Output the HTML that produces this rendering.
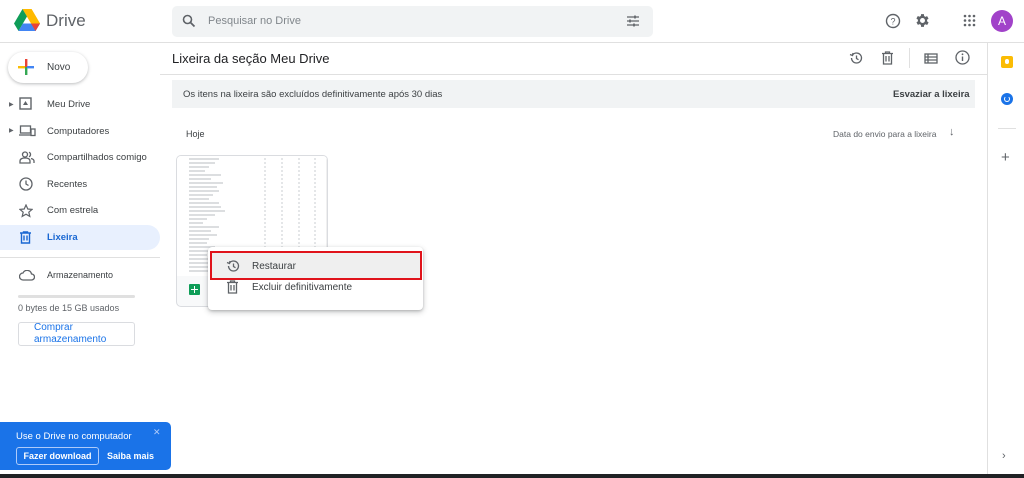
<!DOCTYPE html>
<html><head><meta charset="utf-8"><style>
*{box-sizing:border-box;margin:0;padding:0}
body{width:1024px;height:478px;overflow:hidden;background:#fff;font-family:"Liberation Sans",Arial,sans-serif;color:#3c4043;position:relative;font-size:9px}
.a{position:absolute}
.nav{position:absolute;left:47px;font-size:9.5px;color:#3c4043}
.ic{position:absolute;left:19px}
</style></head><body>
<!-- header -->
<svg class="a" style="left:14px;top:9px" width="26" height="22" viewBox="0 0 26 22"><path d="M8.5 0h9l8.5 14.5h-9z" fill="#ffba00"/><path d="M8.5 0L0 14.5l4.5 7.5L13 7.5z" fill="#0f9d58"/><path d="M4.5 22h17l4.5-7.5H9z" fill="#4285f4"/><path d="M17.5 0L13 7.5l4.5 7H26z" fill="#ffba00"/><path d="M9 14.5h17l-4.5 7.5H4.5z" fill="#4285f4"/><path d="M17 14.5h9l-4.5 7.5z" fill="#ea4335"/></svg>
<div class="a" style="left:46px;top:11px;font-size:17px;color:#5f6368">Drive</div>
<div class="a" style="left:172px;top:6px;width:481px;height:31px;background:#f1f3f4;border-radius:5px"></div>
<svg class="a" style="left:182px;top:14px" width="14" height="14" viewBox="0 0 14 14"><circle cx="5.5" cy="5.5" r="4" fill="none" stroke="#5f6368" stroke-width="1.6"/><path d="M8.5 8.5l4 4" stroke="#5f6368" stroke-width="1.8"/></svg>
<div class="a" style="left:208px;top:15px;font-size:11px;color:#80868b">Pesquisar no Drive</div>
<svg class="a" style="left:626px;top:14px" width="14" height="14" viewBox="0 0 14 14" stroke="#5f6368" stroke-width="1.3"><path d="M1 3h12M1 7h12M1 11h12"/><path d="M9 1.5v3M4 5.5v3M8 9.5v3" stroke-width="1.6"/></svg>
<svg class="a" style="left:885px;top:13px" width="16" height="16" viewBox="0 0 16 16"><circle cx="8" cy="8" r="6.5" fill="none" stroke="#5f6368" stroke-width="1.4"/><text x="8" y="11.5" font-size="9" text-anchor="middle" fill="#5f6368" font-family="Liberation Sans">?</text></svg>
<svg class="a" style="left:914px;top:12px" width="17" height="17" viewBox="0 0 24 24"><path fill="#5f6368" d="M19.4 13a7.5 7.5 0 000-2l2.1-1.6-2-3.5-2.5 1a7 7 0 00-1.7-1L15 3h-4l-.4 2.7a7 7 0 00-1.7 1l-2.5-1-2 3.5L6.6 11a7.5 7.5 0 000 2l-2.1 1.6 2 3.5 2.5-1a7 7 0 001.7 1L11 21h4l.4-2.7a7 7 0 001.7-1l2.5 1 2-3.5zM13 15.5a3.5 3.5 0 110-7 3.5 3.5 0 010 7z" transform="translate(-1 0)"/></svg>
<svg class="a" style="left:963px;top:14px" width="13" height="13" viewBox="0 0 13 13" fill="#5f6368"><circle cx="2" cy="2" r="1.3"/><circle cx="6.5" cy="2" r="1.3"/><circle cx="11" cy="2" r="1.3"/><circle cx="2" cy="6.5" r="1.3"/><circle cx="6.5" cy="6.5" r="1.3"/><circle cx="11" cy="6.5" r="1.3"/><circle cx="2" cy="11" r="1.3"/><circle cx="6.5" cy="11" r="1.3"/><circle cx="11" cy="11" r="1.3"/></svg>
<div class="a" style="left:991px;top:10px;width:22px;height:22px;border-radius:50%;background:#a142c9;color:#fff;font-size:12px;text-align:center;line-height:22px">A</div>
<div class="a" style="left:0;top:42px;width:1024px;height:1px;background:#e0e0e0"></div>
<!-- right panel -->
<div class="a" style="left:987px;top:43px;width:1px;height:431px;background:#e0e0e0"></div>
<div class="a" style="left:1001px;top:56px;width:12px;height:12px;background:#fbbc04;border-radius:2px"></div>
<div class="a" style="left:1005px;top:59px;width:4px;height:5px;background:#fff;border-radius:2px"></div>
<div class="a" style="left:1001px;top:93px;width:12px;height:12px;background:#1a73e8;border-radius:50%"></div>
<div class="a" style="left:1004px;top:96px;width:6px;height:6px;border:1.5px solid #fff;border-radius:50%;border-top-color:transparent"></div>
<div class="a" style="left:998px;top:128px;width:18px;height:1px;background:#e0e0e0"></div>
<div class="a" style="left:1001px;top:149px;font-size:15px;color:#5f6368">+</div>
<div class="a" style="left:1002px;top:450px;font-size:11px;color:#5f6368">›</div>
<!-- sidebar -->
<div class="a" style="left:8px;top:52px;width:80px;height:31px;border-radius:16px;background:#fff;box-shadow:0 1px 3px rgba(60,64,67,.35)"></div>
<svg class="a" style="left:17px;top:58px" width="18" height="18" viewBox="0 0 18 18"><rect x="8" y="1" width="2.4" height="8" fill="#ea4335"/><rect x="8" y="9" width="2.4" height="8" fill="#34a853"/><rect x="1" y="8" width="7" height="2.4" fill="#fbbc04"/><rect x="10" y="8" width="7" height="2.4" fill="#4285f4"/></svg>
<div class="a" style="left:47px;top:62px;font-size:10px;color:#3c4043">Novo</div>
<div class="a" style="left:9px;top:101px;font-size:6px;color:#5f6368">▶</div>
<div class="a" style="left:9px;top:127px;font-size:6px;color:#5f6368">▶</div>
<svg class="ic" style="top:97px" width="13" height="13" viewBox="0 0 13 13"><rect x="1" y="1" width="11" height="11" fill="none" stroke="#5f6368" stroke-width="1.4"/><path d="M4 8h5L6.5 4z" fill="#5f6368"/></svg>
<div class="nav" style="top:99px">Meu Drive</div>
<svg class="ic" style="top:125px" width="17" height="12" viewBox="0 0 17 12" fill="none" stroke="#5f6368" stroke-width="1.3"><rect x="1.5" y="1" width="10" height="7"/><path d="M0 10h12"/><rect x="12" y="4" width="4" height="6.5"/></svg>
<div class="nav" style="top:126px">Computadores</div>
<svg class="ic" style="top:151px" width="16" height="13" viewBox="0 0 16 13" fill="none" stroke="#5f6368" stroke-width="1.3"><circle cx="6" cy="3.5" r="2.5"/><path d="M1 12v-2c0-2 2-3 5-3s5 1 5 3v2zM10 1.2a2.5 2.5 0 010 4.6M12 7.5c2 .5 3 1.5 3 2.5v2"/></svg>
<div class="nav" style="top:152px">Compartilhados comigo</div>
<svg class="ic" style="top:177px" width="14" height="14" viewBox="0 0 14 14" fill="none" stroke="#5f6368" stroke-width="1.3"><circle cx="7" cy="7" r="6"/><path d="M7 3.5V7l2.5 1.5"/></svg>
<div class="nav" style="top:179px">Recentes</div>
<svg class="ic" style="top:204px" width="14" height="14" viewBox="0 0 14 14" fill="none" stroke="#5f6368" stroke-width="1.2"><path d="M7 1l1.8 4 4.2.4-3.2 2.8 1 4.2L7 10.2 3.2 12.4l1-4.2L1 5.4l4.2-.4z"/></svg>
<div class="nav" style="top:205px">Com estrela</div>
<div class="a" style="left:0;top:225px;width:160px;height:25px;background:#e8f0fe;border-radius:0 13px 13px 0"></div>
<svg class="ic" style="top:231px" width="13" height="13" viewBox="0 0 13 13" fill="none" stroke="#1967d2" stroke-width="1.4"><path d="M1 2h11M2.5 2v10h8V2M5 4.5v5M8 4.5v5M4.5 2V1h4v1"/></svg>
<div class="nav" style="top:232px;color:#1967d2;font-weight:bold">Lixeira</div>
<div class="a" style="left:0;top:257px;width:160px;height:1px;background:#e0e0e0"></div>
<svg class="ic" style="top:270px" width="16" height="11" viewBox="0 0 16 11" fill="none" stroke="#5f6368" stroke-width="1.3"><path d="M4 10h8.5a3 3 0 000-6 4.5 4.5 0 00-8.5-1A3.5 3.5 0 004 10z"/></svg>
<div class="nav" style="top:270px;font-size:9px">Armazenamento</div>
<div class="a" style="left:18px;top:295px;width:117px;height:3px;background:#e0e0e0;border-radius:2px"></div>
<div class="a" style="left:18px;top:303px;font-size:9px;color:#5f6368">0 bytes de 15 GB usados</div>
<div class="a" style="left:18px;top:322px;width:117px;height:24px;border:1px solid #dadce0;border-radius:3px"></div>
<div class="a" style="left:34px;top:322px;font-size:10px;color:#1a73e8;line-height:12px">Comprar<br>armazenamento</div>
<!-- promo -->
<div class="a" style="left:0;top:422px;width:171px;height:48px;background:#1a73e8;border-radius:0 5px 5px 0"></div>
<div class="a" style="left:16px;top:431px;font-size:9.5px;color:#fff">Use o Drive no computador</div>
<div class="a" style="left:153px;top:427px;font-size:9px;color:#aecbfa">✕</div>
<div class="a" style="left:16px;top:447px;width:83px;height:18px;border:1px solid #aecbfa;border-radius:3px;color:#fff;font-size:9px;text-align:center;line-height:16px;font-weight:bold">Fazer download</div>
<div class="a" style="left:107px;top:451px;font-size:9px;color:#fff;font-weight:bold">Saiba mais</div>
<div class="a" style="left:0;top:474px;width:1024px;height:4px;background:#202124"></div>
<!-- main -->
<div class="a" style="left:172px;top:51px;font-size:13px;color:#202124">Lixeira da seção Meu Drive</div>
<svg class="a" style="left:849px;top:51px" width="14" height="14" viewBox="0 0 14 14" fill="none" stroke="#5f6368" stroke-width="1.3"><path d="M2.5 7a5 5 0 105-5 5 5 0 00-4 2"/><path d="M1 3.5l2.5 1 .5-2.5" /><path d="M7.5 4.5V7.5l2 1.2"/></svg>
<svg class="a" style="left:881px;top:51px" width="13" height="14" viewBox="0 0 13 14" fill="none" stroke="#5f6368" stroke-width="1.3"><path d="M1 2.5h11M2.5 2.5v10.5h8V2.5M5 5v5.5M8 5v5.5M4.5 2.5V1h4v1.5"/></svg>
<div class="a" style="left:909px;top:48px;width:1px;height:20px;background:#e0e0e0"></div>
<svg class="a" style="left:924px;top:53px" width="14" height="11" viewBox="0 0 14 11" fill="none" stroke="#5f6368" stroke-width="1.3"><rect x="1" y="1" width="12" height="9"/><path d="M1 4h12M1 7h12M4 1v9"/></svg>
<svg class="a" style="left:955px;top:50px" width="15" height="15" viewBox="0 0 15 15"><circle cx="7.5" cy="7.5" r="6.5" fill="none" stroke="#5f6368" stroke-width="1.3"/><path d="M7.5 6.5v4.5" stroke="#5f6368" stroke-width="1.4"/><circle cx="7.5" cy="4.3" r=".9" fill="#5f6368"/></svg>
<div class="a" style="left:160px;top:74px;width:827px;height:1px;background:#e0e0e0"></div>
<div class="a" style="left:172px;top:80px;width:803px;height:28px;background:#f1f3f4"></div>
<div class="a" style="left:183px;top:89px;font-size:9.5px;color:#3c4043">Os itens na lixeira são excluídos definitivamente após 30 dias</div>
<div class="a" style="left:893px;top:89px;font-size:9.5px;color:#3c4043;font-weight:bold">Esvaziar a lixeira</div>
<div class="a" style="left:186px;top:129px;font-size:9px;color:#3c4043">Hoje</div>
<div class="a" style="left:833px;top:129px;font-size:8.5px;color:#5f6368">Data do envio para a lixeira</div>
<div class="a" style="left:949px;top:126px;font-size:11px;color:#5f6368">↓</div>
<!-- card -->
<div class="a" style="left:176px;top:155px;width:152px;height:152px;border:1px solid #dadce0;border-radius:5px;overflow:hidden;background:#f8f9fa">
<svg width="152" height="120" viewBox="0 0 152 120" style="display:block;background:#fff"><g stroke="#b8bcc2" stroke-width="1"><path d="M12 3h30M12 7h26M12 11h20M12 15h16M12 19h32M12 23h22M12 27h34M12 31h28M12 35h30M12 39h24M12 43h20M12 47h30M12 51h32M12 55h36M12 59h26M12 63h18M12 67h14M12 71h30M12 75h22M12 79h28M12 83h20M12 87h18M12 91h26M12 95h22M12 99h18M12 103h24M12 107h28M12 111h20M12 115h24"/></g><g stroke="#c8ccd0" stroke-width="1" stroke-dasharray="2 2"><path d="M88 2v116M105 2v116M122 2v116M138 2v116"/></g><path d="M150 0v120" stroke="#e0e0e0"/></svg>
<div style="position:absolute;left:12px;top:128px;width:11px;height:11px;background:#0f9d58;border-radius:1px"></div>
<div style="position:absolute;left:14px;top:133px;width:7px;height:1.3px;background:#fff"></div>
<div style="position:absolute;left:17px;top:130px;width:1.3px;height:7px;background:#fff"></div>
</div>
<!-- menu -->
<div class="a" style="left:208px;top:247px;width:215px;height:63px;background:#fff;border-radius:4px;box-shadow:0 2px 6px rgba(60,64,67,.3),0 1px 2px rgba(60,64,67,.2)"></div>
<div class="a" style="left:210px;top:251px;width:212px;height:29px;background:#efefef;border:2px solid #e0131b"></div>
<svg class="a" style="left:226px;top:259px" width="14" height="14" viewBox="0 0 14 14" fill="none" stroke="#5f6368" stroke-width="1.3"><path d="M2.5 7a5 5 0 105-5 5 5 0 00-4 2"/><path d="M1 3.5l2.5 1 .5-2.5"/><path d="M7.5 4.5V7.5l2 1.2"/></svg>
<div class="a" style="left:252px;top:261px;font-size:10px;color:#3c4043">Restaurar</div>
<svg class="a" style="left:226px;top:280px" width="13" height="14" viewBox="0 0 13 14" fill="none" stroke="#5f6368" stroke-width="1.3"><path d="M1 2.5h11M2.5 2.5v10.5h8V2.5M5 5v5.5M8 5v5.5M4.5 2.5V1h4v1.5"/></svg>
<div class="a" style="left:252px;top:282px;font-size:10px;color:#3c4043">Excluir definitivamente</div>
</body></html>
